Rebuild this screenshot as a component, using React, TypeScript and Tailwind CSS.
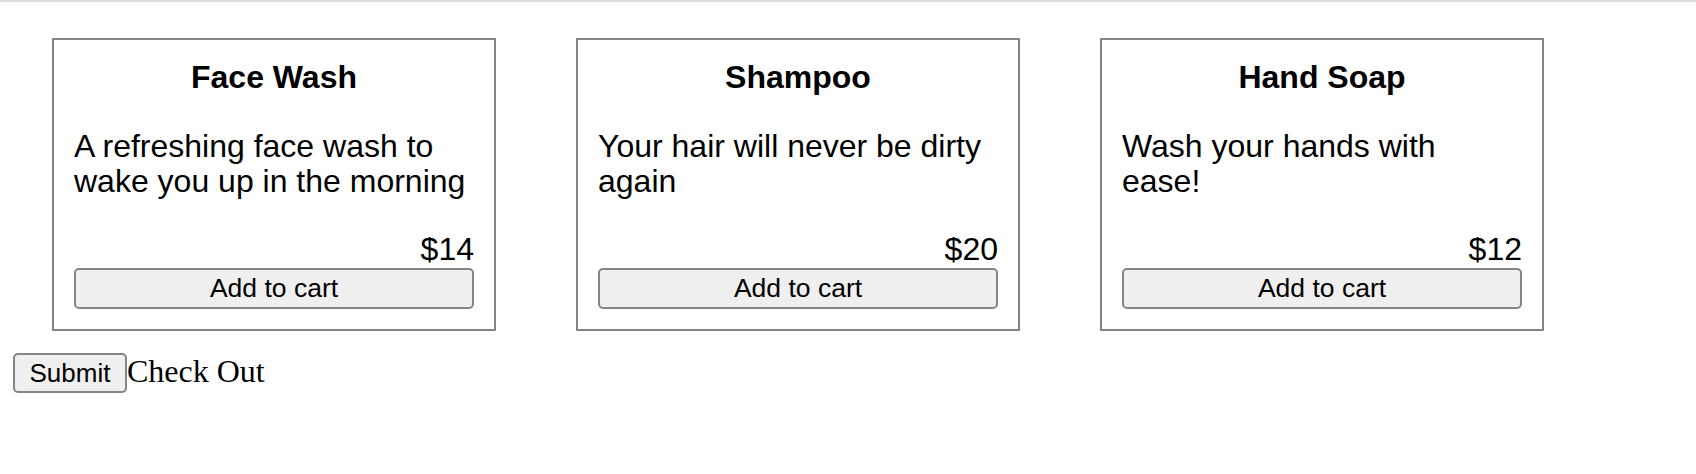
import React from 'react';

type Product = {
  id: number;
  name: string;
  description: string;
  price: number;
};

const products: Product[] = [
  { id: 1, name: 'Face Wash', description: 'A refreshing face wash to wake you up in the morning', price: 14 },
  { id: 2, name: 'Shampoo', description: 'Your hair will never be dirty again', price: 20 },
  { id: 3, name: 'Hand Soap', description: 'Wash your hands with ease!', price: 12 },
];

const ProductCard = ({ product }: { product: Product }) => (
  <div className="w-[444px] flex flex-col border-2 border-[#858585] px-5 pt-5 pb-5 text-black">
    <h2 className="text-center text-[32px] leading-[35px] font-bold">{product.name}</h2>
    <p className="mt-[34px] text-[32px] leading-[34.5px]">{product.description}</p>
    <p className="mt-auto pt-[34px] text-right text-[32px] leading-[34px]">${product.price}</p>
    <button
      type="button"
      className="mt-[2px] h-[41px] w-full rounded-[5px] border-2 border-[#858585] bg-[#efefef] text-[26.5px] leading-none text-black"
    >
      Add to cart
    </button>
  </div>
);

const App = () => {
  return (
    <div className="min-h-[474px] w-full border-t-2 border-[#dcdcdc] bg-white font-['Liberation_Sans',Arial,sans-serif]">
      <div className="flex gap-20 pl-[52px] pt-9">
        {products.map(product => (
          <ProductCard key={product.id} product={product} />
        ))}
      </div>
      <div className="mt-4 ml-[13px] flex items-baseline">
        <button
          type="button"
          className="h-10 w-[114px] rounded-[5px] border-2 border-[#858585] bg-[#efefef] text-[26px] leading-none text-black"
        >
          Submit
        </button>
        <span className="font-['Liberation_Serif','Times_New_Roman',serif] text-[32px] text-black">Check Out</span>
      </div>
    </div>
  );
};

export default App;
